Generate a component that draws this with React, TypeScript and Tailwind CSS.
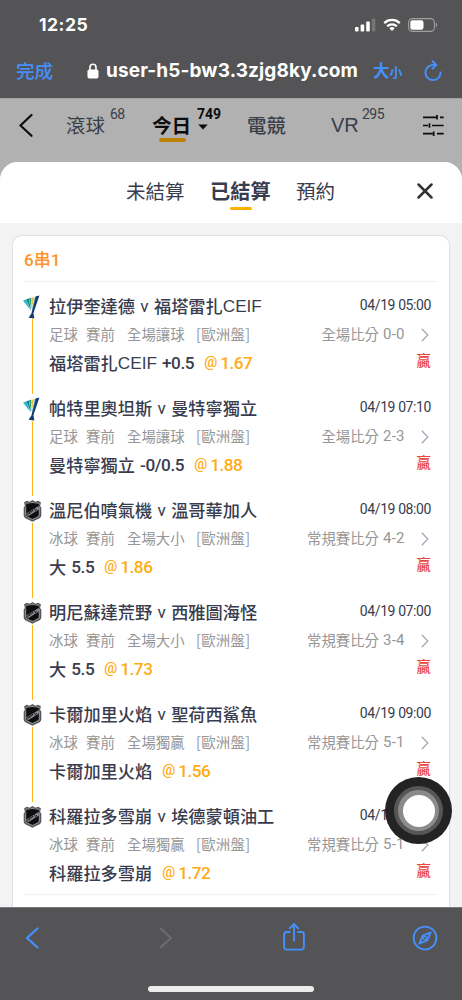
type Bet = {
  league: 'conference' | 'nhl'
  home: string
  away: string
  latin?: string
  time: string
  sport: string
  market: string
  scoreLabel: string
  score: string
  pick: string
  pickLatin?: string
  line?: string
  odds: string
}

const bets: Bet[] = [
  { league: 'conference', home: '拉伊奎達德', away: '福塔雷扎', latin: 'CEIF', time: '04/19 05:00', sport: '足球', market: '全場讓球', scoreLabel: '全場比分', score: '0-0', pick: '福塔雷扎', pickLatin: 'CEIF', line: '+0.5', odds: '1.67' },
  { league: 'conference', home: '帕特里奧坦斯', away: '曼特寧獨立', time: '04/19 07:10', sport: '足球', market: '全場讓球', scoreLabel: '全場比分', score: '2-3', pick: '曼特寧獨立', line: '-0/0.5', odds: '1.88' },
  { league: 'nhl', home: '溫尼伯噴氣機', away: '溫哥華加人', time: '04/19 08:00', sport: '冰球', market: '全場大小', scoreLabel: '常規賽比分', score: '4-2', pick: '大', line: '5.5', odds: '1.86' },
  { league: 'nhl', home: '明尼蘇達荒野', away: '西雅圖海怪', time: '04/19 07:00', sport: '冰球', market: '全場大小', scoreLabel: '常規賽比分', score: '3-4', pick: '大', line: '5.5', odds: '1.73' },
  { league: 'nhl', home: '卡爾加里火焰', away: '聖荷西鯊魚', time: '04/19 09:00', sport: '冰球', market: '全場獨贏', scoreLabel: '常規賽比分', score: '5-1', pick: '卡爾加里火焰', odds: '1.56' },
  { league: 'nhl', home: '科羅拉多雪崩', away: '埃德蒙頓油工', time: '04/19 09:30', sport: '冰球', market: '全場獨贏', scoreLabel: '常規賽比分', score: '5-1', pick: '科羅拉多雪崩', odds: '1.72' },
]

function ConferenceLogo() {
  return (
    <svg className="-ml-[2px] block h-6 w-[18px]" viewBox="0 0 18 24">
      <path d="M0 5.5 3.2 4.6 7.400 15Z" fill="#22b8cf" />
      <path d="M3.200 4.200 5.800 3.500 8 15.600Z" fill="#0b7f94" />
      <path d="M6 3.300 8.300 2.800 8.300 14.500Z" fill="#2f9e63" />
      <path d="M8.400 2.700 11.600 2 8.700 13.500Z" fill="#e5c744" />
      <path d="M12.400 1.500 16.400.500 10.400 18.300 11.400 23.500 5.600 22.800 8.400 18.600Z" fill="#143a72" />
      <path d="M12.400 2.400 9.500 13.500" stroke="#3aa6dc" strokeWidth=".7" />
    </svg>
  )
}

function NhlLogo() {
  return (
    <svg className="block h-6 w-[19px]" viewBox="0 0 18 24">
      <path d="M.6 3.200 3.400 1.800 6.200 2.800 9 1 11.800 2.800 14.600 1.800 17.400 3.200 16.600 7 17.800 8.400V16.400c0 3.200-5 3.900-8.800 6.400C5.200 20.300.2 19.600.2 16.400V8.400L1.400 7Z" fill="#55575a" />
      <path d="M2 4 4.200 3.200 6.500 4 9 2.500 11.500 4 13.800 3.200 16 4 15.500 7.300 16.400 8.800V16c0 2.400-4.200 3.100-7.400 5.200C5.800 19.100 1.600 18.400 1.600 16V8.800L2.500 7.300Z" fill="#8f9194" />
      <path d="M2.700 4.800 9 3.900 15.300 4.800V15.800c0 1.900-3.800 2.700-6.300 4.300-2.500-1.600-6.300-2.400-6.300-4.300Z" fill="#0d0e10" />
      <path d="M2.700 14.200 15.300 7V10.500L4.600 17.200Z" fill="#8d8f92" />
      <path d="m4.800 15.800-.7-2.200 2.400 1-.7-2.400M7.600 13.700 7 11.500M9.500 12.500 8.900 10.400M7.400 12.600l1.900-1.200M11 9.300l.7 2.200 1.700-1.100" fill="none" stroke="#111214" strokeWidth=".9" />
    </svg>
  )
}

function StatusBar() {
  return (
    <div className="flex h-[50px] items-center justify-between pl-[39px] pr-[24px]">
      <span className="font-['Inter',sans-serif] text-[17.500px] font-bold leading-5 tracking-[0.500px] text-white">12:25</span>
      <div className="flex items-center gap-[7px]">
        <svg width="21" height="14" viewBox="0 0 21 14" fill="#fff">
          <rect x="0" y="9" width="3.600" height="4.500" rx="1" />
          <rect x="5.600" y="6.500" width="3.600" height="7" rx="1" />
          <rect x="11.200" y="3.500" width="3.600" height="10" rx="1" />
          <rect x="16.800" y=".5" width="3.600" height="13" rx="1" opacity=".2" />
        </svg>
        <svg width="18" height="14" viewBox="0 0 18 14" fill="none" stroke="#fff" strokeWidth="2.300">
          <path d="M1.200 5.100a11.200 11.200 0 0 1 15.600 0" />
          <path d="M4.100 8.300a7 7 0 0 1 9.800 0" />
          <path d="m9 13-2.700-2.700a3.900 3.900 0 0 1 5.400 0Z" fill="#fff" stroke="none" />
        </svg>
        <svg width="30" height="14" viewBox="0 0 30 14">
          <rect x=".6" y=".6" width="25.800" height="12.800" rx="3.800" fill="none" stroke="#a0a0a2" strokeWidth="1.100" />
          <rect x="2.300" y="2.300" width="13.200" height="9.400" rx="2.200" fill="#fff" />
          <path d="M27.800 4.800v4.400a2.400 2.400 0 0 0 0-4.400Z" fill="#a0a0a2" />
        </svg>
      </div>
    </div>
  )
}

function AddressBar() {
  return (
    <div className="flex h-12 items-center pb-[6px] pl-4 text-[#4590fb]">
      <span className="-mt-[2px] w-[71px] text-[18.600px] font-medium leading-6">完成</span>
      <svg width="12" height="16" viewBox="0 0 12 16">
        <rect x=".5" y="6.500" width="11" height="9" rx="1.800" fill="#fff" />
        <path d="M3 7V4.300a3 3 0 0 1 6 0V7" fill="none" stroke="#fff" strokeWidth="1.600" />
      </svg>
      <span className="ml-[7px] w-[267px] whitespace-nowrap font-['Inter',sans-serif] text-[19px] font-bold leading-6 tracking-[0.120px] text-white">
        user-h5-bw3.3zjg8ky.com
      </span>
      <span className="w-[51px] whitespace-nowrap text-[16.500px] font-bold leading-6">
        大<span className="text-[13px]">小</span>
      </span>
      <svg width="18" height="22" viewBox="0 0 18 22" fill="none" stroke="currentColor" strokeWidth="2" strokeLinecap="round" strokeLinejoin="round">
        <path d="M16.600 12.500A7.600 7.600 0 1 1 9 4.900h2.600" />
        <path d="M8.600 1.200 12.300 4.900 8.600 8.600" />
      </svg>
    </div>
  )
}

function SportNav() {
  return (
    <nav className="flex h-[90px] items-start border-t border-[#a2a2a3] bg-[#b1b1b1] pt-3 text-[19.400px] leading-7 text-[#3a3d4a]">
      <svg className="ml-[19px] mt-[2px]" width="14" height="24" viewBox="0 0 14 24" fill="none" stroke="#0c0c0e" strokeWidth="2.200" strokeLinecap="round">
        <path d="M12.500 2 1.500 12.500l11 10.300" />
      </svg>
      <span className="ml-[33px] w-[44px]">滾球</span>
      <sup className="top-0 -mt-[7px] w-[42px] font-['Roboto',sans-serif] text-[14px] leading-5 tracking-[-0.700px]">68</sup>
      <div className="flex w-[45px] flex-col text-[#0c0c0e]">
        <span className="text-[19.600px] font-bold">今日</span>
        <i className="ml-[7px] mt-[-1px] h-[3.500px] w-[27px] rounded-full bg-[#bd8006]" />
      </div>
      <div className="-mt-[7px] flex w-[50px] flex-col text-[#0c0c0e]">
        <span className="font-['Roboto',sans-serif] text-[14px] font-bold leading-5">749</span>
        <svg className="ml-[1px]" width="10" height="6" viewBox="0 0 10 6">
          <path d="M.3.500h9.400L5 5.500Z" fill="currentColor" />
        </svg>
      </div>
      <span className="w-[84px] font-medium">電競</span>
      <span className="w-[31px] font-['Liberation_Sans',sans-serif] text-[20px]">VR</span>
      <sup className="top-0 -mt-[7px] w-[61px] font-['Roboto',sans-serif] text-[14px] leading-5 tracking-[-0.500px]">295</sup>
      <svg className="mt-[4px]" width="21" height="21" viewBox="0 0 21 21" fill="none" stroke="#0c0c0e" strokeWidth="1.700">
        <path d="M0 2.300h14M17 2.300h3.700M14 0v4.600M0 10.500h5M9 10.500h11.700M6.500 8.200v4.600M0 18.700h9.800M14 18.700h6.700M10.700 16.400V21" />
      </svg>
    </nav>
  )
}

function BetRow({ bet, last }: { bet: Bet; last: boolean }) {
  return (
    <li className="flex h-[102.200px] pl-[10px]">
      <div className="flex w-[19px] flex-col items-center">
        {bet.league === 'nhl' ? <NhlLogo /> : <ConferenceLogo />}
        {!last && <i className="mb-[3px] w-[1.400px] flex-1 bg-[#ffb21c]" />}
      </div>
      <div className="ml-[7px] flex-1 pr-[18px]">
        <div className="flex h-[22px] items-center justify-between whitespace-nowrap text-[#393c4e]">
          <div className="flex items-center text-[17.200px] font-medium leading-[22px]">
            <span>{bet.home}</span>
            <span className="w-[19px] text-center font-['Roboto',sans-serif] font-normal">v</span>
            <span>{bet.away}</span>
            {bet.latin && <span className="font-['Liberation_Sans',sans-serif] text-[17.200px] font-normal">{bet.latin}</span>}
          </div>
          <span className="-mt-px font-['Roboto',sans-serif] text-[14px] tracking-[-0.400px]">{bet.time}</span>
        </div>
        <div className="mt-[7px] flex h-5 items-center whitespace-nowrap text-[14.400px] leading-5 text-[#969696]">
          <span className="w-[37px]">{bet.sport}</span>
          <span className="w-[41px]">賽前</span>
          <span className="w-[69px]">{bet.market}</span>
          <span className="tracking-[0.300px]">[歐洲盤]</span>
          <span className="ml-auto">{bet.scoreLabel}</span>
          <span className="ml-[4px] w-[25px] font-['Roboto',sans-serif] text-[15px] tracking-[0.200px]">{bet.score}</span>
          <svg className="ml-[13px] mr-[2px] mt-[2px]" width="8" height="14" viewBox="0 0 8 14" fill="none" stroke="#a4a8b5" strokeWidth="1.300">
            <path d="m.8.800 6 6.200-6 6.200" />
          </svg>
        </div>
        <div className="mt-[8px] flex h-[22px] items-center whitespace-nowrap text-[17.200px] font-medium leading-[22px] text-[#393c4e]">
          <span>{bet.pick}</span>
          {bet.pickLatin && <span className="font-['Liberation_Sans',sans-serif] text-[17.200px] font-normal">{bet.pickLatin}</span>}
          {bet.line && <span className="ml-[5px] font-['Roboto',sans-serif] tracking-[-0.400px]">{bet.line}</span>}
          <span className="ml-[10px] flex items-center font-['Roboto',sans-serif] text-[#ffac12]">
            <span className="w-[16px] text-[14.500px]">@</span>
            <span className="tracking-[-0.500px]">{bet.odds}</span>
          </span>
          <span className="mb-[6px] ml-auto text-[14.400px] text-[#e8463f]">贏</span>
        </div>
      </div>
    </li>
  )
}

function BetSheet() {
  return (
    <section className="-mt-[26px] flex h-[745px] flex-col overflow-hidden rounded-t-[18px] bg-[#f3f3f3]">
      <header className="flex h-[61px] shrink-0 items-start bg-white pl-[126px] pt-[15px] text-[19.500px] leading-7 text-[#393c4e]">
        <span className="w-[84px]">未結算</span>
        <div className="flex w-[86px] flex-col">
          <span className="text-[20.200px] font-bold">已結算</span>
          <i className="ml-5 mt-[2px] h-[3px] w-[22px] rounded-full bg-[#ffb000]" />
        </div>
        <span className="w-[121px]">預約</span>
        <svg className="mt-[6px]" width="16" height="16" viewBox="0 0 16 16" stroke="#333" strokeWidth="2.500" strokeLinecap="round">
          <path d="m1.500 1.500 13 13m0-13-13 13" />
        </svg>
      </header>
      <div className="mx-3 mt-3 flex-1 rounded-t-[10px] border border-b-0 border-[#dce0e9] bg-white">
        <h2 className="mx-[11px] mb-[12.500px] h-[46px] border-b border-[#f1f1f1] pt-[11px] text-[17px] font-medium leading-6 text-[#ff9330]">
          <span className="font-['Roboto',sans-serif]">6</span>串<span className="font-['Roboto',sans-serif]">1</span>
        </h2>
        <ul className="h-[599px]">
          {bets.map((bet, i) => (
            <BetRow key={bet.home} bet={bet} last={i === bets.length - 1} />
          ))}
        </ul>
        <div className="mx-[11px] h-px bg-[#f1f1f1]" />
      </div>
    </section>
  )
}

function Toolbar() {
  return (
    <footer className="flex h-[93px] flex-col border-t border-[#79797b] bg-[#545456] text-[#4590fb]">
      <div className="flex h-[60px] items-center pl-[25px]">
        <svg width="14" height="22" viewBox="0 0 14 22" fill="none" stroke="currentColor" strokeWidth="2.300" strokeLinecap="round" strokeLinejoin="round">
          <path d="M12.500 1.500 2 11l10.500 9.500" />
        </svg>
        <svg className="ml-[120px]" width="14" height="22" viewBox="0 0 14 22" fill="none" stroke="#6d6d6f" strokeWidth="2" strokeLinecap="round" strokeLinejoin="round">
          <path d="m1.500 1.500 10.500 9.500-10.500 9.500" />
        </svg>
        <svg className="-mt-[2px] ml-[110px]" width="22" height="28" viewBox="0 0 22 28" fill="none" stroke="currentColor" strokeWidth="1.900" strokeLinecap="round" strokeLinejoin="round">
          <path d="M7 9H3.600A2.500 2.500 0 0 0 1.100 11.500v12.600a2.500 2.500 0 0 0 2.500 2.500h14.800a2.500 2.500 0 0 0 2.500-2.500V11.500A2.500 2.500 0 0 0 18.400 9H15" />
          <path d="M11 17.500V1.300M6.700 5.300 11 1l4.300 4.300" />
        </svg>
        <svg className="ml-[107px]" width="26" height="26" viewBox="0 0 26 26" fill="none" stroke="currentColor" strokeWidth="1.900">
          <circle cx="13" cy="13" r="11.400" />
          <path d="m18.600 7.400-3.300 7.900-7.900 3.300 3.300-7.900Z" strokeLinejoin="round" />
          <circle cx="13" cy="13" r="1.700" strokeWidth="1.300" />
        </svg>
      </div>
      <div className="mx-auto mt-[17.500px] h-[6px] w-[166px] rounded-full bg-[#ececec]" />
    </footer>
  )
}

export default function App() {
  return (
    <main className="relative h-[1000px] w-[462px] overflow-hidden bg-[#545456] font-['Noto_Sans_CJK_TC',sans-serif]">
      <StatusBar />
      <AddressBar />
      <SportNav />
      <BetSheet />
      <Toolbar />
      {/* AssistiveTouch button floating over the page */}
      <div className="absolute left-[385px] top-[777px] flex size-[67px] items-center justify-center rounded-full bg-[#232323]">
        <div className="flex size-[49px] items-center justify-center rounded-full bg-[#565656]">
          <div className="flex size-[41px] items-center justify-center rounded-full bg-[#8b8b8b]">
            <div className="size-[32px] rounded-full bg-white" />
          </div>
        </div>
      </div>
    </main>
  )
}
